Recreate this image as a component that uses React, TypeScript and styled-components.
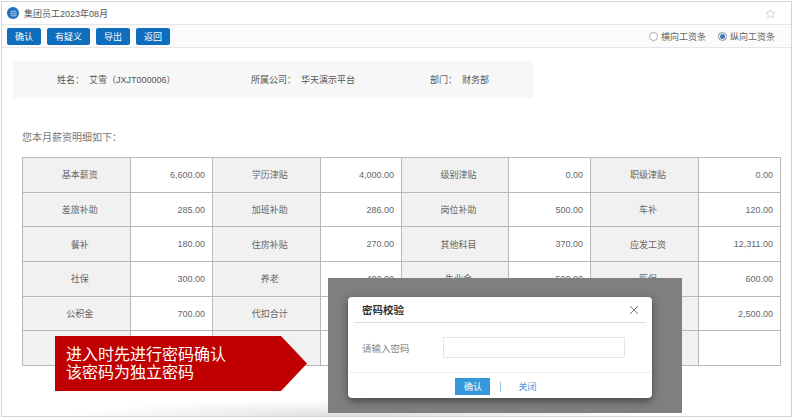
import React from 'react';
import styled, { createGlobalStyle } from 'styled-components';

const Global = createGlobalStyle`
  html, body { margin: 0; padding: 0; background: #fff; overflow: hidden; }
  body { font-family: "Liberation Sans", "Noto Sans CJK SC", sans-serif; }
  * { box-sizing: border-box; }
`;

const Frame = styled.div`
  position: relative;
  width: 791px;
  height: 416px;
  margin: 1px 0 0 1px;
  border: 1px solid #d4d4d4;
  overflow: hidden;
`;

const Header = styled.header`
  height: 23px;
  display: flex;
  align-items: center;
  padding: 0 15px 0 5px;
  border-bottom: 1px solid #e6e6e6;
  font-size: 9px;
  color: #555;
`;

const Logo = styled.span`
  width: 12px;
  height: 12px;
  border-radius: 50%;
  background: #1d6fb8;
  margin-right: 5px;
  display: flex;
  align-items: center;
  justify-content: center;
`;

const Title = styled.span`
  flex: 1;
`;

const Toolbar = styled.div`
  height: 23px;
  display: flex;
  align-items: center;
  padding: 0 16px 0 5px;
  gap: 6px;
  background: #fbfbfb;
  border-bottom: 1px solid #e6e6e6;
`;

const ToolButton = styled.button`
  height: 17px;
  padding: 0 8px;
  border: none;
  border-radius: 2px;
  background: #0f6dbd;
  color: #fff;
  font: inherit;
  font-size: 9px;
`;

const RadioGroup = styled.div`
  margin-left: auto;
  display: flex;
  gap: 12px;
`;

const RadioLabel = styled.label`
  display: flex;
  align-items: center;
  gap: 3px;
  font-size: 9px;
  color: #666;
`;

const RadioDot = styled.span<{ $on?: boolean }>`
  width: 9px;
  height: 9px;
  border-radius: 50%;
  border: 1px solid #aaa;
  background: ${p => (p.$on ? '#3f78b8' : '#fff')};
  box-shadow: ${p => (p.$on ? 'inset 0 0 0 1px #fff' : 'none')};
`;

const Content = styled.main`
  padding: 13px 10px 0 20px;
`;

const InfoBar = styled.div`
  width: 520px;
  height: 37px;
  margin-left: -9px;
  padding-left: 44px;
  display: flex;
  align-items: center;
  background: #f7f7f7;
  font-size: 9px;
  color: #555;
`;

const InfoItem = styled.span<{ $w: number }>`
  width: ${p => p.$w}px;
  white-space: nowrap;
`;

const Lead = styled.p`
  margin: 33px 0 13px;
  font-size: 10px;
  line-height: 13px;
  color: #777;
`;

const Table = styled.div`
  width: 759px;
  display: grid;
  grid-template-columns: 107.5px 82.5px 107.5px 81.5px 107px 82px 108px 82px;
  grid-auto-rows: 34.7px;
  border-top: 1px solid #b8b8b8;
  border-left: 1px solid #b8b8b8;
`;

const Cell = styled.div<{ $head?: boolean }>`
  display: flex;
  align-items: center;
  justify-content: ${p => (p.$head ? 'center' : 'flex-end')};
  padding: ${p => (p.$head ? '0 0 0 7px' : '0 7px')};
  border-right: 1px solid #b8b8b8;
  border-bottom: 1px solid #b8b8b8;
  background: ${p => (p.$head ? '#f1f1f1' : '#fff')};
  font-size: 9px;
  color: #666;
`;

const Mask = styled.div`
  position: absolute;
  left: 326px;
  top: 276px;
  width: 354px;
  height: 135px;
  padding: 19px 0 0 20px;
  background: #7f7f7f;
`;

const Dialog = styled.div`
  width: 304px;
  height: 101px;
  background: #fff;
  border-radius: 4px;
  box-shadow: 0 3px 9px rgba(0, 0, 0, 0.45);
  display: flex;
  flex-direction: column;
`;

const DialogHead = styled.div`
  height: 26px;
  margin: 0 6px;
  padding: 0 7px 0 8px;
  display: flex;
  align-items: center;
  justify-content: space-between;
  border-bottom: 1px solid #ddd;
  font-size: 10.5px;
  font-weight: 700;
  color: #333;
`;

const DialogBody = styled.div`
  flex: 1;
  display: flex;
  align-items: center;
  padding-left: 14px;
  font-size: 9.5px;
  color: #888;
  white-space: nowrap;
`;

const PasswordInput = styled.div`
  width: 182px;
  height: 21px;
  flex-shrink: 0;
  margin-left: 33px;
  border: 1px solid #e4e4e4;
  border-radius: 1px;
`;

const DialogFoot = styled.div`
  height: 26px;
  display: flex;
  align-items: center;
  justify-content: center;
  padding: 2px 8px 0 0;
  border-top: 1px solid #eee;
  font-size: 9px;
  color: #3b97de;
`;

const ConfirmButton = styled.button`
  width: 35px;
  height: 17px;
  border: none;
  background: #3498db;
  color: #fff;
  font: inherit;
`;

const Divider = styled.span`
  width: 1px;
  height: 10px;
  margin: 0 17px 0 10px;
  background: #8fc2e8;
`;

const Callout = styled.div`
  position: absolute;
  left: 53px;
  top: 334px;
  width: 252px;
  height: 55px;
  padding: 10px 0 0 11px;
  background: #c00000;
  clip-path: polygon(0 0, 226px 0, 100% 50%, 226px 100%, 0 100%);
  font-size: 16px;
  line-height: 18px;
  color: #fff;
`;

const BottomShade = styled.div`
  position: absolute;
  left: 63px;
  bottom: 0;
  width: 585px;
  height: 16px;
  background: radial-gradient(farthest-side at 50% 100%, #dcdcdc, #eeeeee 45%, rgba(255, 255, 255, 0));
`;

const rows = [
  ['基本薪资', '6,600.00', '学历津贴', '4,000.00', '级别津贴', '0.00', '职级津贴', '0.00'],
  ['差旅补助', '285.00', '加班补助', '286.00', '岗位补助', '500.00', '车补', '120.00'],
  ['餐补', '180.00', '住房补贴', '270.00', '其他科目', '370.00', '应发工资', '12,311.00'],
  ['社保', '300.00', '养老', '400.00', '失业金', '500.00', '医保', '600.00'],
  ['公积金', '700.00', '代扣合计', '', '', '', '', '2,500.00'],
  ['', '', '', '', '', '', '', ''],
];

export default function App() {
  return (
    <>
      <Global />
      <Frame>
        <Header>
          <Logo>
            <svg width="7" height="7" viewBox="0 0 7 7">
              <rect x="0.5" y="0.5" width="6" height="6" rx="1" fill="#7fb0dc" />
              <path d="M1.5 2.5h4M1.5 4.5h4" stroke="#1d6fb8" strokeWidth="0.7" />
            </svg>
          </Logo>
          <Title>集团员工2023年08月</Title>
          <svg width="11" height="11" viewBox="0 0 24 24" fill="none" stroke="#c9cfdc" strokeWidth="2">
            <path d="M12 2.5l3 6.3 6.9.9-5 4.8 1.2 6.9-6.1-3.3-6.1 3.3 1.2-6.9-5-4.8 6.9-.9z" />
          </svg>
        </Header>
        <Toolbar>
          <ToolButton>确认</ToolButton>
          <ToolButton>有疑义</ToolButton>
          <ToolButton>导出</ToolButton>
          <ToolButton>返回</ToolButton>
          <RadioGroup>
            <RadioLabel><RadioDot />横向工资条</RadioLabel>
            <RadioLabel><RadioDot $on />纵向工资条</RadioLabel>
          </RadioGroup>
        </Toolbar>
        <Content>
          <InfoBar>
            <InfoItem $w={194}>姓名：&nbsp; 艾雪（JXJT000006）</InfoItem>
            <InfoItem $w={179}>所属公司：&nbsp; 华天演示平台</InfoItem>
            <InfoItem $w={100}>部门：&nbsp; 财务部</InfoItem>
          </InfoBar>
          <Lead>您本月薪资明细如下：</Lead>
          <Table>
            {rows.flatMap((row, r) =>
              row.map((text, c) => (
                <Cell key={`${r}-${c}`} $head={c % 2 === 0}>{text}</Cell>
              )),
            )}
          </Table>
        </Content>
        <BottomShade />
        <Callout>
          进入时先进行密码确认
          <br />
          该密码为独立密码
        </Callout>
        <Mask>
          <Dialog>
            <DialogHead>
              密码校验
              <svg width="10" height="10" viewBox="0 0 10 10">
                <path d="M1 1l8 8M9 1l-8 8" stroke="#777" strokeWidth="1" />
              </svg>
            </DialogHead>
            <DialogBody>
              请输入密码
              <PasswordInput />
            </DialogBody>
            <DialogFoot>
              <ConfirmButton>确认</ConfirmButton>
              <Divider />
              关闭
            </DialogFoot>
          </Dialog>
        </Mask>
      </Frame>
    </>
  );
}
